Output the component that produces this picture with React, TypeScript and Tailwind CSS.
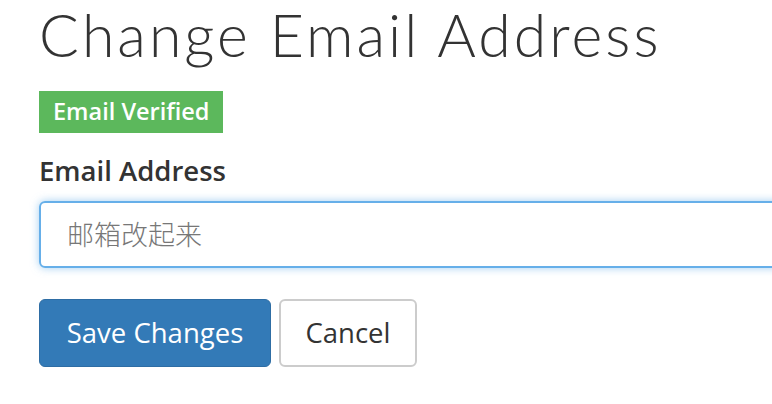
import React from "react";

const App = () => {
  return (
    <div className="min-h-[404px] w-[772px] overflow-hidden bg-white pl-[39px] pt-[2px] font-['Open_Sans',sans-serif] text-[#333]">
      <h1 className="whitespace-nowrap font-['Lato',sans-serif] text-[59px] font-light leading-[66px] tracking-[3px] text-[#333]">
        Change Email Address
      </h1>
      <div className="mt-[23px] inline-flex h-[42px] items-center bg-[#5cb85c] px-[14px] text-[23.5px] font-semibold text-white">
        Email Verified
      </div>
      <form className="mt-[20px]" onSubmit={(e) => e.preventDefault()}>
        <label className="block text-[27.5px] font-semibold leading-[36px] text-[#333]">Email Address</label>
        <input
          type="email"
          placeholder="邮箱改起来"
          className="mt-[12px] block h-[67px] w-[760px] rounded-[6px] border-2 border-[#66afe9] px-[26px] font-['Open_Sans','Noto_Sans_CJK_SC',sans-serif] text-[27px] font-light shadow-[0_0_8px_rgba(102,175,233,0.6)] outline-none placeholder:text-[#777]"
        />
        <div className="mt-[31px] flex gap-[8px]">
          <button
            type="submit"
            className="h-[68px] w-[232px] rounded-[6px] border border-[#2e6da4] bg-[#337ab7] text-[27.5px] text-white"
          >
            Save Changes
          </button>
          <button
            type="button"
            className="h-[68px] w-[138px] rounded-[6px] border-2 border-[#ccc] bg-white text-[27.5px] text-[#333]"
          >
            Cancel
          </button>
        </div>
      </form>
    </div>
  );
};

export default App;
